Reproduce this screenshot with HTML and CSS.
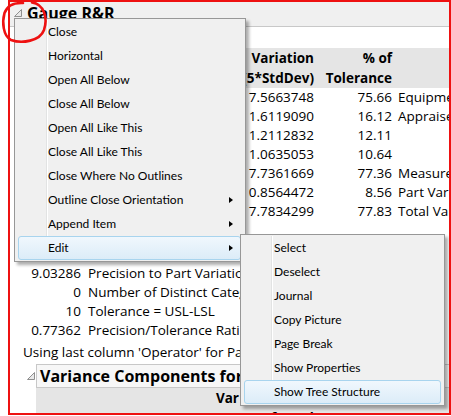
FILE: index.html
```html
<!DOCTYPE html>
<html>
<head>
<meta charset="utf-8">
<title>Gauge R&amp;R</title>
<link rel="stylesheet" href="styles.css">
</head>
<body>
<div class="report">
  <div class="outline-head">
    <svg class="disclosure" width="8" height="8" viewBox="0 0 8 8"><path d="M7.5 0.5 L7.5 7.5 L0.5 7.5 Z" fill="#e8e8e8" stroke="#8f8f8f" stroke-width="1"/></svg>
    <span class="outline-title">Gauge R&amp;R</span>
  </div>
  <div class="outline-body">
    <div class="grr-table">
      <div class="grr-row grr-head">
        <div class="c1"></div>
        <div class="c2">Variation<br>(5*StdDev)</div>
        <div class="c3">% of<br>Tolerance</div>
        <div class="c4"></div>
      </div>
      <div class="grr-row"><div class="c1"></div><div class="c2">7.5663748</div><div class="c3">75.66</div><div class="c4">Equipment Variation (EV)</div></div>
      <div class="grr-row"><div class="c1"></div><div class="c2">1.6119090</div><div class="c3">16.12</div><div class="c4">Appraiser Variation (AV)</div></div>
      <div class="grr-row"><div class="c1"></div><div class="c2">1.2112832</div><div class="c3">12.11</div><div class="c4"></div></div>
      <div class="grr-row"><div class="c1"></div><div class="c2">1.0635053</div><div class="c3">10.64</div><div class="c4"></div></div>
      <div class="grr-row"><div class="c1"></div><div class="c2">7.7361669</div><div class="c3">77.36</div><div class="c4">Measurement Variation (RR)</div></div>
      <div class="grr-row"><div class="c1"></div><div class="c2">0.8564472</div><div class="c3">8.56</div><div class="c4">Part Variation (PV)</div></div>
      <div class="grr-row"><div class="c1"></div><div class="c2">7.7834299</div><div class="c3">77.83</div><div class="c4">Total Variation (TV)</div></div>
    </div>
    <div class="stats">
      <div class="stat"><span class="sv">9.03286</span><span class="sl">Precision to Part Variation</span></div>
      <div class="stat"><span class="sv">0</span><span class="sl">Number of Distinct Categories</span></div>
      <div class="stat"><span class="sv">10</span><span class="sl">Tolerance = USL-LSL</span></div>
      <div class="stat"><span class="sv">0.77362</span><span class="sl">Precision/Tolerance Ratio</span></div>
    </div>
    <div class="note">Using last column 'Operator' for Part Variation</div>
    <div class="vc-head">
      <svg class="disclosure" width="8" height="8" viewBox="0 0 8 8"><path d="M7.5 0.5 L7.5 7.5 L0.5 7.5 Z" fill="#e8e8e8" stroke="#8f8f8f" stroke-width="1"/></svg>
      <div class="vc-box">Variance Components for Gauge R&amp;R</div>
    </div>
    <div class="vc-table">
      <div class="vc-row"><div></div><div class="r">Var</div><div></div><div></div></div>
      <div class="vc-row"><div>Component</div><div class="r">Component</div><div class="r">% of Total</div><div>20 40 60 80</div></div>
    </div>
  </div>
</div>

<div class="menu main-menu">
  <div class="item">Close</div>
  <div class="item">Horizontal</div>
  <div class="item">Open All Below</div>
  <div class="item">Close All Below</div>
  <div class="item">Open All Like This</div>
  <div class="item">Close All Like This</div>
  <div class="item">Close Where No Outlines</div>
  <div class="item sub">Outline Close Orientation</div>
  <div class="item sub">Append Item</div>
  <div class="item sub hot">Edit</div>
</div>

<div class="menu sub-menu">
  <div class="item">Select</div>
  <div class="item">Deselect</div>
  <div class="item">Journal</div>
  <div class="item">Copy Picture</div>
  <div class="item">Page Break</div>
  <div class="item">Show Properties</div>
  <div class="item hot">Show Tree Structure</div>
</div>

<div class="red-frame"></div>
<svg class="red-loop" width="52" height="48" viewBox="0 0 52 48"><path d="M32 2.5 C44 4 48 18 44 30 C40 41 22 44 11 40 C3 36 2 22 4.5 13 C7 6 14 2.5 23 3" fill="none" stroke="#ee1111" stroke-width="2.6" stroke-linecap="round"/></svg>
</body>
</html>
```
FILE: styles.css
```css
body {
  margin: 0;
  width: 451px;
  height: 416px;
  position: relative;
  overflow: hidden;
  background: #ffffff;
  font-family: "Open Sans", "Segoe UI", sans-serif;
  color: #000;
}

.report {
  margin-left: 9px;
  width: 440px;
  height: 413px;
  overflow: hidden;
  font-size: 13.5px;
  white-space: nowrap;
}

.outline-head {
  height: 26px;
  background: #f0f0f0;
  border-bottom: 1px solid #c8c8c8;
  display: flex;
  align-items: center;
  padding-left: 5px;
  gap: 5px;
}

.disclosure {
  display: block;
  flex: none;
}

.outline-title {
  font-weight: bold;
  font-size: 16px;
}

.outline-body {
  padding-top: 21px;
}

.grr-table {
  margin-left: 12px;
}

.grr-row {
  display: grid;
  grid-template-columns: 203px 90px 78px 1fr;
  line-height: 19px;
}

.grr-row .c2,
.grr-row .c3 {
  text-align: right;
}

.grr-row .c4 {
  padding-left: 6px;
}

.grr-head {
  background: #e5e5e5;
  font-weight: bold;
  line-height: 20px;
}

.stats {
  margin-top: 43px;
  margin-left: 14px;
}

.stat {
  display: grid;
  grid-template-columns: 58px 1fr;
  column-gap: 7px;
  line-height: 19px;
}

.sv {
  text-align: right;
}

.note {
  margin-top: 3px;
  margin-left: 14px;
  line-height: 19px;
}

.vc-head {
  margin-top: 2px;
  margin-left: 18px;
  display: flex;
  align-items: center;
  gap: 1px;
}

.vc-box {
  flex: 1;
  height: 22px;
  line-height: 22px;
  border: 1px solid #c8c8c8;
  border-right: none;
  background: #f7f7f7;
  padding-left: 3px;
  font-weight: bold;
  font-size: 16px;
}

.vc-table {
  margin-left: 27px;
  background: #e5e5e5;
  font-weight: bold;
}

.vc-row {
  display: grid;
  grid-template-columns: 124px 75px 75px 1fr;
  line-height: 20px;
  padding-left: 4px;
}

.vc-row .r {
  text-align: right;
}

.vc-row > div:last-child {
  padding-left: 10px;
}

/* context menus */
.menu {
  position: absolute;
  box-sizing: border-box;
  background: #f0f0f0;
  border: 1px solid #979797;
  box-shadow: 3px 3px 3px rgba(0, 0, 0, 0.32);
  font-family: "Lato", "Segoe UI", sans-serif;
  font-size: 12px;
  white-space: nowrap;
}

.menu::before {
  content: "";
  position: absolute;
  top: 1px;
  bottom: 1px;
  width: 1px;
  background: #e2e3e3;
  box-shadow: 1px 0 0 #ffffff;
}

.main-menu {
  left: 14px;
  top: 18px;
  width: 232px;
  padding: 1px 4px 1px 3px;
}

.main-menu::before {
  left: 31px;
}

.sub-menu {
  left: 240px;
  top: 234px;
  width: 205px;
  padding: 1px 3px 1px 3px;
}

.sub-menu::before {
  left: 30px;
}

.item {
  position: relative;
  height: 24px;
  box-sizing: border-box;
  line-height: 22px;
  border: 1px solid transparent;
  border-radius: 3px;
  padding-left: 29px;
}

.item.sub::after {
  content: "";
  position: absolute;
  right: 7px;
  top: 7.5px;
  border-left: 4px solid #000;
  border-top: 3.5px solid transparent;
  border-bottom: 3.5px solid transparent;
}

.item.hot {
  border-color: #a8d4ee;
  background: linear-gradient(to bottom, #f0f7fd, #dcecf8);
}

.red-frame {
  position: absolute;
  left: 8px;
  top: 0;
  width: 443px;
  height: 415px;
  box-sizing: border-box;
  border: 2px solid #ee1111;
  pointer-events: none;
}

.red-loop {
  position: absolute;
  left: 0;
  top: 0;
}
```
